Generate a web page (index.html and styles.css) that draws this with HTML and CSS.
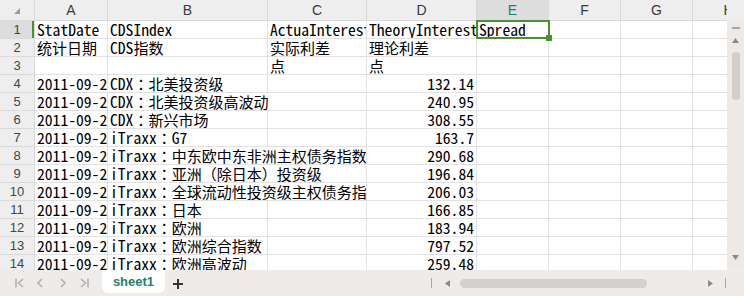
FILE: index.html
```html
<!DOCTYPE html>
<html>
<head>
<meta charset="utf-8">
<link rel="stylesheet" href="styles.css">
</head>
<body>
<div class="app">
  <div class="main">
    <div class="sheet">
      <div class="grid">
        <div class="ch corner"><svg width="6" height="6" viewBox="0 0 6 6"><path d="M6 0V6H0Z" fill="#9a9a9a"/></svg></div>
        <div class="ch">A</div><div class="ch">B</div><div class="ch">C</div><div class="ch">D</div><div class="ch sel">E</div><div class="ch">F</div><div class="ch">G</div><div class="ch">H</div>

        <div class="rh sel">1</div><div class="c">StatDate</div><div class="c">CDSIndex</div><div class="c">ActuaInterestSpread</div><div class="c">TheoryInterestSpread</div><div class="c">Spread</div><div class="c"></div><div class="c"></div><div class="c"></div>
        <div class="rh">2</div><div class="c"><span class="z">统计日期</span></div><div class="c">CDS<span class="z">指数</span></div><div class="c"><span class="z">实际利差</span></div><div class="c"><span class="z">理论利差</span></div><div class="c"></div><div class="c"></div><div class="c"></div><div class="c"></div>
        <div class="rh">3</div><div class="c"></div><div class="c"></div><div class="c"><span class="z">点</span></div><div class="c"><span class="z">点</span></div><div class="c"></div><div class="c"></div><div class="c"></div><div class="c"></div>
        <div class="rh">4</div><div class="c">2011-09-29</div><div class="c">CDX<span class="z"><span class="p">：</span>北美投资级</span></div><div class="c"></div><div class="c num">132.14</div><div class="c"></div><div class="c"></div><div class="c"></div><div class="c"></div>
        <div class="rh">5</div><div class="c">2011-09-29</div><div class="c span2">CDX<span class="z"><span class="p">：</span>北美投资级高波动</span></div><div class="c num">240.95</div><div class="c"></div><div class="c"></div><div class="c"></div><div class="c"></div>
        <div class="rh">6</div><div class="c">2011-09-29</div><div class="c">CDX<span class="z"><span class="p">：</span>新兴市场</span></div><div class="c"></div><div class="c num">308.55</div><div class="c"></div><div class="c"></div><div class="c"></div><div class="c"></div>
        <div class="rh">7</div><div class="c">2011-09-29</div><div class="c">iTraxx<span class="z"><span class="p">：</span></span>G7</div><div class="c"></div><div class="c num">163.7</div><div class="c"></div><div class="c"></div><div class="c"></div><div class="c"></div>
        <div class="rh">8</div><div class="c">2011-09-29</div><div class="c span2">iTraxx<span class="z"><span class="p">：</span>中东欧中东非洲主权债务指数</span></div><div class="c num">290.68</div><div class="c"></div><div class="c"></div><div class="c"></div><div class="c"></div>
        <div class="rh">9</div><div class="c">2011-09-29</div><div class="c span2">iTraxx<span class="z"><span class="p">：</span>亚洲（除日本）投资级</span></div><div class="c num">196.84</div><div class="c"></div><div class="c"></div><div class="c"></div><div class="c"></div>
        <div class="rh">10</div><div class="c">2011-09-29</div><div class="c span2">iTraxx<span class="z"><span class="p">：</span>全球流动性投资级主权债务指数</span></div><div class="c num">206.03</div><div class="c"></div><div class="c"></div><div class="c"></div><div class="c"></div>
        <div class="rh">11</div><div class="c">2011-09-29</div><div class="c">iTraxx<span class="z"><span class="p">：</span>日本</span></div><div class="c"></div><div class="c num">166.85</div><div class="c"></div><div class="c"></div><div class="c"></div><div class="c"></div>
        <div class="rh">12</div><div class="c">2011-09-29</div><div class="c">iTraxx<span class="z"><span class="p">：</span>欧洲</span></div><div class="c"></div><div class="c num">183.94</div><div class="c"></div><div class="c"></div><div class="c"></div><div class="c"></div>
        <div class="rh">13</div><div class="c">2011-09-29</div><div class="c">iTraxx<span class="z"><span class="p">：</span>欧洲综合指数</span></div><div class="c"></div><div class="c num">797.52</div><div class="c"></div><div class="c"></div><div class="c"></div><div class="c"></div>
        <div class="rh">14</div><div class="c">2011-09-29</div><div class="c">iTraxx<span class="z"><span class="p">：</span>欧洲高波动</span></div><div class="c"></div><div class="c num">259.48</div><div class="c"></div><div class="c"></div><div class="c"></div><div class="c"></div>
      </div>
      <div class="selection"><span class="handle"></span></div>
    </div>
    <div class="vbar">
      <div class="vbar-head"></div>
      <div class="vtrack">
        <span class="vminus"></span>
        <svg class="vup" width="7" height="5" viewBox="0 0 7 5"><path d="M3.5 0L7 5H0Z" fill="#8a8a8a"/></svg>
        <span class="vthumb"></span>
        <svg class="vdown" width="7" height="5" viewBox="0 0 7 5"><path d="M0 0H7L3.5 5Z" fill="#8a8a8a"/></svg>
      </div>
    </div>
  </div>
  <div class="bottombar">
    <div class="nav">
      <svg class="n1" width="9" height="10" viewBox="0 0 9 10"><path d="M1 0.5V9.5M8 1L3.5 5L8 9" fill="none" stroke="#b3b3b3" stroke-width="1.6"/></svg>
      <svg class="n2" width="6" height="10" viewBox="0 0 6 10"><path d="M5 1L1 5L5 9" fill="none" stroke="#b3b3b3" stroke-width="1.6"/></svg>
      <svg class="n3" width="6" height="10" viewBox="0 0 6 10"><path d="M1 1L5 5L1 9" fill="none" stroke="#b3b3b3" stroke-width="1.6"/></svg>
      <svg class="n4" width="9" height="10" viewBox="0 0 9 10"><path d="M1 1L5.5 5L1 9M8 0.5V9.5" fill="none" stroke="#b3b3b3" stroke-width="1.6"/></svg>
    </div>
    <div class="tab">sheet1</div>
    <svg class="plus" width="10" height="10" viewBox="0 0 10 10"><path d="M5 0V10M0 5H10" stroke="#333" stroke-width="2"/></svg>
    <div class="hscroll">
      <span class="hsep"></span>
      <svg class="hleft" width="5" height="7" viewBox="0 0 5 7"><path d="M5 0V7L0 3.5Z" fill="#8a8a8a"/></svg>
      <span class="hthumb"></span>
      <svg class="hright" width="5" height="7" viewBox="0 0 5 7"><path d="M0 0V7L5 3.5Z" fill="#8a8a8a"/></svg>
      <span class="hsep hsep2"></span>
    </div>
  </div>
</div>
</body>
</html>
```
FILE: styles.css
```css
html, body {
  margin: 0;
  padding: 0;
  background: #ffffff;
}
.app {
  width: 744px;
  height: 296px;
  display: flex;
  flex-direction: column;
  overflow: hidden;
}
.main {
  height: 270px;
  display: flex;
}
.sheet {
  width: 727px;
  height: 270px;
  overflow: hidden;
  position: relative;
  flex: none;
}
.grid {
  display: grid;
  grid-template-columns: 35px 73px 160px 99px 110px 72px 72px 72px 72px;
  grid-template-rows: 21px;
  grid-auto-rows: 18px;
  width: 765px;
}
.ch, .rh {
  box-sizing: border-box;
  background: #eeeeee;
  border-right: 1px solid #dadada;
  border-bottom: 1px solid #dadada;
  font-family: "Liberation Sans", Arial, sans-serif;
  color: #3a3a3a;
  display: flex;
  align-items: center;
  justify-content: center;
}
.ch {
  font-size: 14px;
}
.rh {
  font-size: 13px;
  color: #444;
}
.ch.corner svg {
  margin-top: 2px;
}
.ch.sel {
  background: #dddddd;
  color: #23806f;
}
.rh.sel {
  background: #dddddd;
  box-shadow: inset -2px 0 0 #4a902c;
}
.c {
  box-sizing: border-box;
  border-right: 1px solid #e2e2e2;
  border-bottom: 1px solid #e2e2e2;
  padding: 0 2px;
  overflow: hidden;
  white-space: nowrap;
  display: flex;
  align-items: flex-end;
  font-family: "Noto Sans Mono CJK SC", "Liberation Mono", "Noto Sans CJK SC", monospace;
  font-size: 15.6px;
  line-height: 17px;
  color: #000;
}
.c .z {
  font-size: 15px;
}
.c .p {
  font-family: "Noto Sans Mono CJK TC", "Noto Sans CJK TC", "Noto Sans Mono CJK SC", monospace;
}
.c.num {
  justify-content: flex-end;
}
.c.span2 {
  grid-column: span 2;
}
.selection {
  position: absolute;
  left: 476px;
  top: 20px;
  width: 74px;
  height: 19px;
  box-sizing: border-box;
  border: 2px solid #4a902c;
}
.handle {
  position: absolute;
  right: -4px;
  bottom: -4px;
  width: 6px;
  height: 6px;
  background: #4a902c;
}
.vbar {
  width: 17px;
  flex: none;
  display: flex;
  flex-direction: column;
}
.vbar-head {
  height: 21px;
  background: #eeeeee;
  flex: none;
}
.vtrack {
  flex: 1;
  background: #ede9e7;
  display: flex;
  flex-direction: column;
  align-items: center;
}
.vminus {
  width: 8px;
  height: 2px;
  background: #a8a8a8;
  margin-top: 6px;
}
.vup {
  margin-top: 9px;
}
.vthumb {
  width: 8px;
  height: 48px;
  border-radius: 4px;
  background: #d1cdcb;
  margin-top: 9px;
}
.vdown {
  margin-top: auto;
  margin-bottom: 10px;
}
.bottombar {
  height: 26px;
  background: #efebe9;
  display: flex;
  align-items: flex-start;
}
.nav {
  display: flex;
  align-items: center;
  height: 26px;
  padding-left: 15px;
}
.nav .n2 { margin-left: 13px; }
.nav .n3 { margin-left: 17px; }
.nav .n4 { margin-left: 14px; }
.tab {
  margin-left: 13px;
  width: 63px;
  height: 23px;
  background: #ffffff;
  border-radius: 0 0 6px 6px;
  display: flex;
  align-items: center;
  justify-content: center;
  font-family: "Liberation Sans", Arial, sans-serif;
  font-weight: bold;
  font-size: 13px;
  color: #23806f;
}
.plus {
  margin-left: 8px;
  margin-top: 9px;
}
.hscroll {
  margin-left: auto;
  width: 313px;
  height: 26px;
  display: flex;
  align-items: center;
}
.hsep {
  width: 1px;
  height: 10px;
  background: #a8a8a8;
}
.hleft {
  margin-left: 13px;
}
.hthumb {
  margin-left: 10px;
  width: 187px;
  height: 9px;
  border-radius: 5px;
  background: #d4d0ce;
}
.hright {
  margin-left: 61px;
}
.hsep2 {
  margin-left: 12px;
}
```
